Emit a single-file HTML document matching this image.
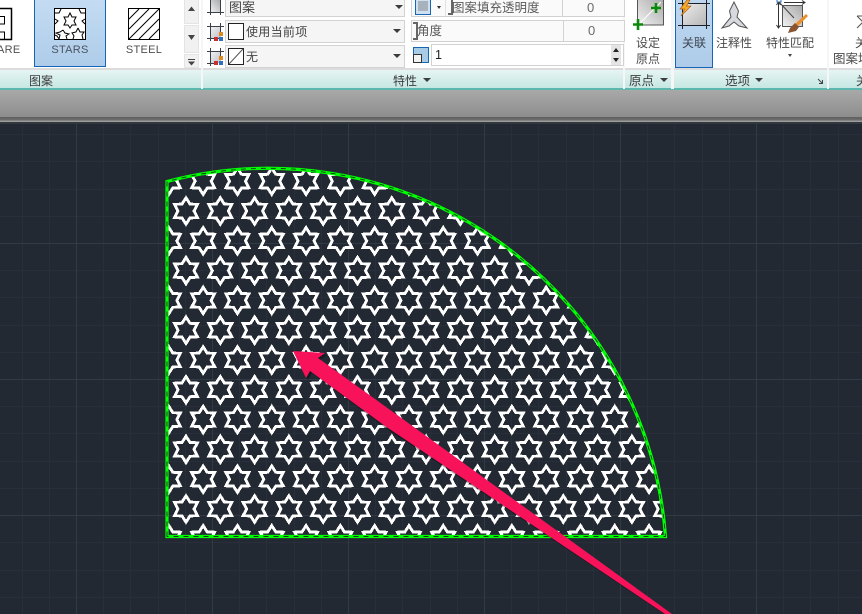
<!DOCTYPE html>
<html><head><meta charset="utf-8">
<style>
html,body{margin:0;padding:0;background:#222933}
#p{position:relative;width:862px;height:614px;overflow:hidden;background:#222933;font-family:"Liberation Sans","Noto Sans CJK SC",sans-serif;font-size:12px;color:#4a4a4a}
#p div{position:absolute;box-sizing:border-box}
.t{white-space:nowrap;line-height:16px;height:16px}
.tt{top:73px;height:16px;line-height:16px;white-space:nowrap;color:#3c3c3c;text-align:center}
.bar{top:70px;height:18px;background:linear-gradient(#e6f5f3,#c6e7e3)}
.dd{background:#f5f5f5;border:1px solid #d2d2d2}
.ar{width:0;height:0;border-left:4px solid transparent;border-right:4px solid transparent;border-top:4px solid #3c3c3c}
svg{position:absolute;overflow:visible}
</style></head><body><div id="p">

<svg style="left:0;top:0" width="0" height="0"><defs>
<linearGradient id="h" x1="0" y1="0" x2="1" y2="1"><stop offset="0" stop-color="#eeeeee"/><stop offset="1" stop-color="#b4b4b4"/></linearGradient>
<linearGradient id="h2" x1="1" y1="0" x2="0" y2="1"><stop offset="0" stop-color="#a8a8a8"/><stop offset="1" stop-color="#f2f2f2"/></linearGradient>
<linearGradient id="h3" x1="0" y1="0" x2="1" y2="1"><stop offset="0" stop-color="#f6f6f6"/><stop offset="1" stop-color="#bcc0c8"/></linearGradient>
</defs></svg>

<!-- ribbon -->
<div style="left:0;top:0;width:862px;height:69px;background:#fff"></div>
<div style="left:0;top:68px;width:862px;height:2px;background:#dcdcdc"></div>
<div class="bar" style="left:0;width:862px"></div>
<div style="left:0;top:88px;width:862px;height:2px;background:#5cb8ae"></div>
<div style="left:0;top:90px;width:862px;height:27px;background:linear-gradient(#a9a9a9,#8d8d8d)"></div>
<div style="left:0;top:117px;width:862px;height:5px;background:linear-gradient(#5f5f5f,#6a6a6a 50%,#a8a8a8)"></div>
<div style="left:0;top:122px;width:862px;height:2px;background:#33383f"></div>

<!-- panel separators -->
<div style="left:201px;top:0;width:2px;height:89px;background:#f6f6f6"></div>
<div style="left:623px;top:0;width:2px;height:89px;background:#f6f6f6"></div>
<div style="left:671px;top:0;width:3px;height:89px;background:#f6f6f6"></div>
<div style="left:827px;top:0;width:2px;height:89px;background:#f6f6f6"></div>

<!-- gallery -->
<svg style="left:0;top:0" width="20" height="45"><path d="M-4 8.500H11.500V39.500H-4" fill="#fff" stroke="#000" stroke-width="1.500"/><path d="M0 16.500H4.500V24H0M0 32H4.500V39" fill="none" stroke="#000"/></svg>
<div class="t" style="left:-3px;top:42px;font-size:11px;letter-spacing:.3px;color:#505050">ARE</div>
<div style="left:34px;top:-2px;width:72px;height:69px;background:linear-gradient(#c4dcf3,#aecce9);border:1px solid #1566b6"></div>
<svg style="left:54px;top:8px" width="32" height="32" viewBox="0 0 32 32">
<rect x=".5" y=".5" width="31" height="31" fill="#fff" stroke="#000"/>
<g fill="none" stroke="#000" stroke-width="1">
<path d="M16 5 18 9 22 9 20 13 22 17 18 17 16 20 14 17 10 17 12 13 10 9 14 9Z"/>
<path d="M7 1 5 5 1 5M25 1 27 5 31 5M1 11 4 13 1 16M31 11 28 13 31 16"/>
<path d="M9 22 11 25 15 26 12 28 13 31M5 31 3 28 1 27M5 31 6 27 2 25 6 24 9 22M24 20 26 24 30 24 28 27 29 31M24 20 22 24 18 25 20 28 19 31"/>
</g></svg>
<div class="t" style="left:34px;top:42px;width:72px;text-align:center;font-size:11px;letter-spacing:.3px;color:#4a5460">STARS</div>
<svg style="left:128px;top:8px" width="32" height="32" viewBox="0 0 32 32">
<rect x=".5" y=".5" width="31" height="31" fill="#fff" stroke="#000"/>
<path d="M1 11 11 1M1 21 21 1M1 31 31 1M11 31 31 11M21 31 31 21" stroke="#000" stroke-width="1" fill="none"/>
</svg>
<div class="t" style="left:118px;top:42px;width:52px;text-align:center;font-size:11px;letter-spacing:.3px;color:#505050">STEEL</div>
<!-- gallery scroll -->
<div style="left:184px;top:-2px;width:15px;height:26px;background:#f1f1f1;border:1px solid #e4e4e4"></div>
<div style="left:184px;top:25px;width:15px;height:28px;background:#f1f1f1;border:1px solid #e4e4e4"></div>
<div style="left:184px;top:54px;width:15px;height:14px;background:#f1f1f1;border:1px solid #e4e4e4"></div>
<svg style="left:184px;top:0" width="15" height="68"><path d="M4 11H11L7.500 6.500ZM4 35H11L7.500 40ZM4 59H11V60H4ZM4 61.500H11L7.500 65.500Z" fill="#444"/></svg>
<div class="tt" style="left:0;width:82px">图案</div>

<!-- properties: left icons -->
<svg style="left:206px;top:0" width="19" height="68">
<rect x="4" y="0" width="11" height="12" fill="url(#h2)"/>
<rect x="4" y="26" width="11" height="12" fill="url(#h3)"/>
<rect x="4" y="51" width="11" height="12" fill="url(#h3)"/>
<g fill="none" stroke="#3a3f48"><path d="M4.500 0V15M1 12.500H18M14.500 0V15"/><path d="M4.500 23V41M1 38.500H14M1 26.500H18M14.500 23V32"/><path d="M4.500 48V66M1 63.500H8M1 51.500H18M14.500 48V56"/></g>
<rect x="8" y="37" width="4" height="4" fill="#c83030"/><rect x="13" y="32" width="4" height="4" fill="#e08820"/><rect x="13" y="37" width="4" height="4" fill="#2f6fc0"/>
<rect x="8" y="61" width="4" height="4" fill="#c83030"/><rect x="13" y="56" width="4" height="4" fill="#e08820"/><rect x="13" y="61" width="4" height="4" fill="#2f6fc0"/>
</svg>
<div class="dd" style="left:225px;top:-6px;width:180px;height:23px"></div>
<div class="dd" style="left:225px;top:20px;width:180px;height:23px"></div>
<div class="dd" style="left:225px;top:45px;width:180px;height:23px"></div>
<div class="t" style="left:229px;top:0;font-size:13px;color:#444">图案</div>
<div style="left:228px;top:23px;width:16px;height:17px;background:#fff;border:1px solid #222"></div>
<div class="t" style="left:246px;top:24px;color:#444;letter-spacing:.3px">使用当前项</div>
<svg style="left:228px;top:48px" width="16" height="17"><rect x=".5" y=".5" width="15" height="16" fill="#fff" stroke="#222"/><path d="M1 16 15 1" stroke="#555"/></svg>
<div class="t" style="left:246px;top:49px;color:#444">无</div>
<div class="ar" style="left:395px;top:5px"></div>
<div class="ar" style="left:393px;top:29px"></div>
<div class="ar" style="left:393px;top:54px"></div>

<!-- properties: right side -->
<div class="dd" style="left:411px;top:-6px;width:214px;height:23px;background:#fafafa"></div>
<div style="left:445px;top:-5px;width:1px;height:21px;background:#e2e2e2"></div>
<div style="left:562px;top:-5px;width:1px;height:21px;background:#d2d2d2"></div>
<div style="left:415px;top:-2px;width:16px;height:17px;background:#cfe0ee;border:1px solid #1566b6"></div>
<div style="left:418px;top:1px;width:10px;height:10px;background:#a8b2bc"></div>
<div style="left:437px;top:6px;border-left:2.500px solid transparent;border-right:2.500px solid transparent;border-top:3px solid #333"></div>
<div style="left:448px;top:-2px;width:5px;height:17px;border:2px solid #666;border-left:0;border-top:0"></div>
<div class="t" style="left:452px;top:0;color:#5a5a5a;font-size:12.500px">图案填充透明度</div>
<div class="t" style="left:587px;top:0;color:#6a6a6a;font-size:13px">0</div>
<div class="dd" style="left:411px;top:20px;width:214px;height:22px;background:#fafafa"></div>
<div style="left:563px;top:21px;width:1px;height:20px;background:#d2d2d2"></div>
<div style="left:413px;top:22px;width:5px;height:18px;border:2px solid #666;border-left:0"></div>
<div class="t" style="left:417px;top:23px;color:#5a5a5a;font-size:12.500px">角度</div>
<div class="t" style="left:588px;top:23px;color:#6a6a6a;font-size:13px">0</div>
<div style="left:413px;top:47px;width:16px;height:16px;background:#a8cbe6;border:1px solid #1566b6"></div>
<div style="left:413px;top:54px;width:9px;height:9px;background:#f2f2f2;border:1px solid #333"></div>
<div style="left:431px;top:44px;width:193px;height:22px;background:#fff;border:1px solid #d2d2d2"></div>
<div class="t" style="left:435px;top:47px;color:#222;font-size:12.500px">1</div>
<div style="left:611px;top:45px;width:10px;height:20px;background:#e4e4e4"></div>
<svg style="left:611px;top:45px" width="10" height="20"><path d="M2 7H8L5 3ZM2 13H8L5 17Z" fill="#222"/></svg>
<div class="tt" style="left:393px;width:24px">特性</div>
<div class="ar" style="left:423px;top:78px"></div>

<!-- 原点 -->
<svg style="left:632px;top:0" width="34" height="30">
<rect x="5.500" y="-2" width="26" height="27" fill="url(#h2)" stroke="#555"/>
<path d="M7 24 29 2" stroke="#fff"/>
<path d="M19 8H29M24 3V13" stroke="#0a8a0a" stroke-width="2.600"/>
<path d="M1 24.500H11M6 19V30" stroke="#0a8a0a" stroke-width="2.600"/>
</svg>
<div class="t" style="left:625px;top:35px;width:46px;text-align:center">设定</div>
<div class="t" style="left:625px;top:51px;width:46px;text-align:center">原点</div>
<div class="tt" style="left:629px;width:25px;font-size:12.500px">原点</div>
<div class="ar" style="left:660px;top:78px"></div>

<!-- 选项 -->
<div style="left:675px;top:-2px;width:38px;height:70px;background:linear-gradient(#bdd7f0,#aecce9);border:1px solid #1566b6"></div>
<svg style="left:678px;top:0" width="32" height="28">
<rect x="4" y="3" width="25" height="23" fill="url(#h)"/>
<path d="M4.500 -3V29M0 25.500H32M28.500 -3V29M0 3.500H32" stroke="#1a1f28" fill="none"/>
<path d="M9 0 2 9H6.500L3 16 13 6H8.500L12 0Z" fill="#f7a928" stroke="#b0601a" stroke-width=".7"/>
</svg>
<div class="t" style="left:675px;top:35px;width:38px;text-align:center;color:#3f4650">关联</div>
<svg style="left:720px;top:0" width="30" height="30">
<path d="M14 2 18.500 11 17 17 27 28 19 26 14 22 9 26 2 28 11 17 9.500 11Z" fill="#d6dade" stroke="#555"/>
</svg>
<div class="t" style="left:714px;top:35px;width:40px;text-align:center">注释性</div>
<svg style="left:776px;top:0" width="32" height="36">
<path d="M2.500 3V27M0.500 5 2.500 2 4.500 5M0.500 25 2.500 28 4.500 25M8 2.500H28M26 .5 29 2.500 26 4.500" stroke="#333" fill="none"/>
<rect x="6.500" y="5.500" width="20" height="21" fill="url(#h2)" stroke="#555"/>
<rect x="1" y="-2" width="4" height="4" fill="#fff" stroke="#2a6fc0"/>
<path d="M3 2 18 18" stroke="#444"/>
<path d="M30 14 19 24 21.500 26.500 32 16Z" fill="#e8902c"/>
<path d="M19 23 14 28 12 33 20 31 23 27Z" fill="#8a5430"/>
</svg>
<div class="t" style="left:760px;top:35px;width:60px;text-align:center">特性匹配</div>
<div style="left:788px;top:54px;border-left:2.500px solid transparent;border-right:2.500px solid transparent;border-top:3px solid #444"></div>
<div class="tt" style="left:725px;width:25px;font-size:12.500px">选项</div>
<div class="ar" style="left:755px;top:78px"></div>
<svg style="left:817px;top:78px" width="7" height="7"><path d="M1 1 5 5M5.500 2V5.500H2" stroke="#444" fill="none"/></svg>

<!-- last panel -->
<svg style="left:855px;top:14px" width="10" height="16"><path d="M2 2H10M2 2 8 8 2 14" stroke="#555" fill="none"/></svg>
<div class="t" style="left:855px;top:35px">关</div>
<div class="t" style="left:833px;top:51px;font-size:12.500px">图案填</div>
<div class="tt" style="left:856px;width:12px">关</div>

<!-- canvas -->
<svg style="left:0;top:0" width="862" height="614" viewBox="0 0 862 614">
<defs>
<path id="s" d="M0-13.200 4-6.930 11.430-6.600 8 0 11.430 6.600 4 6.930 0 13.200-4 6.930-11.430 6.600-8 0-11.430-6.600-4-6.930Z" fill="none" stroke="#fff" stroke-width="2.900"/>
<g id="r">
<use href="#s" x="0"/><use href="#s" x="34.300"/><use href="#s" x="68.600"/><use href="#s" x="102.900"/>
<use href="#s" x="137.200"/><use href="#s" x="171.500"/><use href="#s" x="205.800"/><use href="#s" x="240.100"/>
<use href="#s" x="274.400"/><use href="#s" x="308.700"/><use href="#s" x="343"/><use href="#s" x="377.300"/>
<use href="#s" x="411.600"/><use href="#s" x="445.900"/><use href="#s" x="480.200"/><use href="#s" x="514.500"/>
</g>
<clipPath id="c"><path d="M166 537V181A398 398 0 0 1 666 537Z"/></clipPath>
</defs>
<!-- grid -->
<g stroke="#282f3a" stroke-width="1" shape-rendering="crispEdges" fill="none">
<path d="M22.500 124V614M49.500 124V614M103.500 124V614M130.500 124V614M158.500 124V614M185.500 124V614M239.500 124V614M266.500 124V614M294.500 124V614M321.500 124V614M375.500 124V614M402.500 124V614M430.500 124V614M457.500 124V614M511.500 124V614M538.500 124V614M566.500 124V614M593.500 124V614M647.500 124V614M674.500 124V614M702.500 124V614M729.500 124V614M783.500 124V614M810.500 124V614M838.500 124V614"/>
<path d="M0 134.500H862M0 161.500H862M0 189.500H862M0 216.500H862M0 270.500H862M0 297.500H862M0 325.500H862M0 352.500H862M0 406.500H862M0 433.500H862M0 461.500H862M0 488.500H862M0 542.500H862M0 570.500H862M0 597.500H862"/>
</g>
<g stroke="#323a46" stroke-width="1" shape-rendering="crispEdges" fill="none">
<path d="M76.500 124V614M212.500 124V614M348.500 124V614M484.500 124V614M620.500 124V614M756.500 124V614"/>
<path d="M0 243.500H862M0 379.500H862M0 515.500H862"/>
</g>
<!-- hatch -->
<g clip-path="url(#c)" shape-rendering="crispEdges">
<use href="#r" x="151.700" y="151.400"/>
<use href="#r" x="168.850" y="181.200"/>
<use href="#r" x="151.700" y="211"/>
<use href="#r" x="168.850" y="240.800"/>
<use href="#r" x="151.700" y="270.600"/>
<use href="#r" x="168.850" y="300.400"/>
<use href="#r" x="151.700" y="330.200"/>
<use href="#r" x="168.850" y="360"/>
<use href="#r" x="151.700" y="389.800"/>
<use href="#r" x="168.850" y="419.600"/>
<use href="#r" x="151.700" y="449.400"/>
<use href="#r" x="168.850" y="479.200"/>
<use href="#r" x="151.700" y="509"/>
<use href="#r" x="168.850" y="538.800"/>
</g>
<!-- outline -->
<path d="M167 536.500V181.500A398 398 0 0 1 665.500 536.500Z" fill="none" stroke="#00ff00" stroke-width="3.200"/>
<path d="M167 536.500V181.500A398 398 0 0 1 665.500 536.500Z" fill="none" stroke="#14361c" stroke-width=".9" stroke-dasharray="5 5"/>
<!-- arrow -->
<path d="M295 353 327 355 320 360 400 419 674 616 667 616 387 429 312 373 308 380Z" fill="#000" opacity=".35"/>
<path d="M293 351 325 353 318 358 400 417 672 614 665 614 385 426 310 371 306 378Z" fill="#f7125a"/>
</svg>
</div></body></html>
